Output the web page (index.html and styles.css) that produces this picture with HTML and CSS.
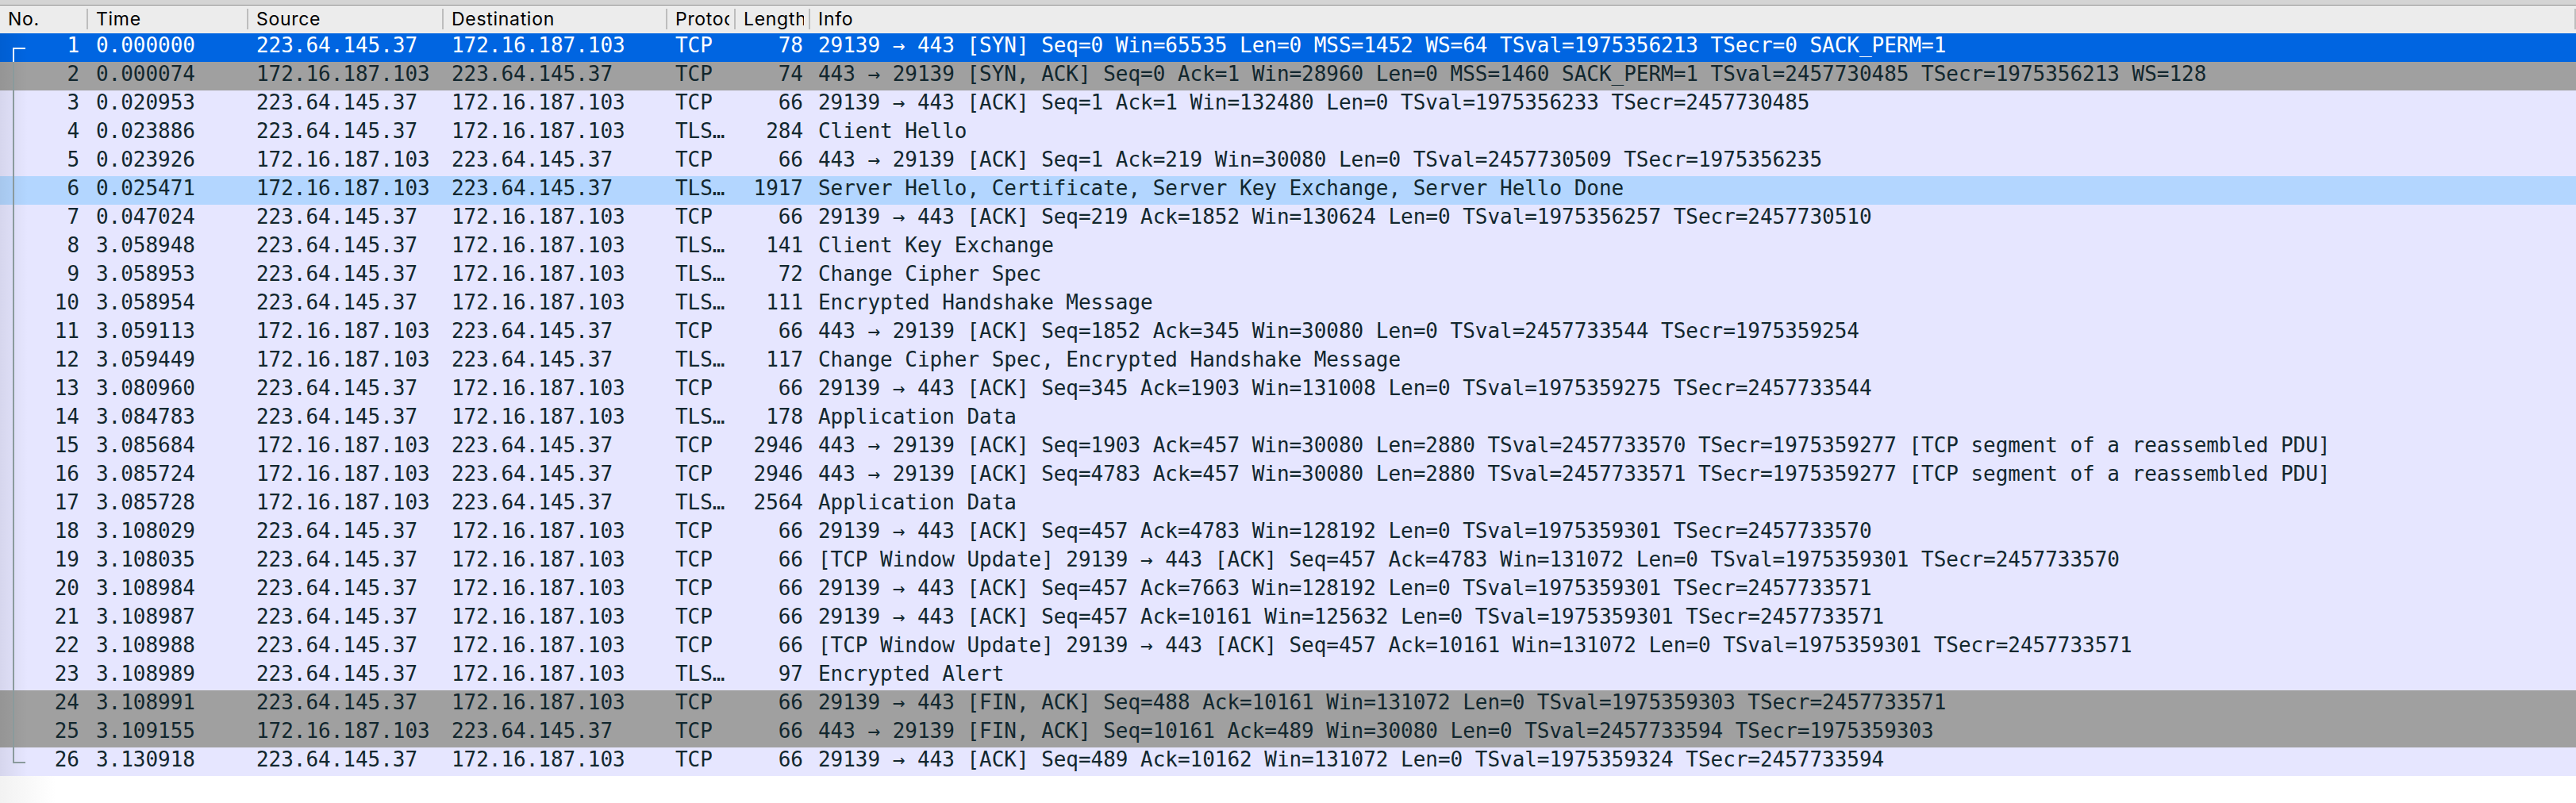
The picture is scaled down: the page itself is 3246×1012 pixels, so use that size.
FILE: index.html
```html
<!DOCTYPE html>
<html lang="en">

<head>
    <meta charset="UTF-8">
    <title>Packet List</title>
    <link rel="stylesheet" href="styles.css">
</head>

<body>
    <div class="toolbar-edge"></div>
    <table class="packet-list">
        <colgroup>
            <col class="col-no">
            <col class="col-time">
            <col class="col-source">
            <col class="col-dest">
            <col class="col-proto">
            <col class="col-length">
            <col>
        </colgroup>
        <thead>
            <tr>
                <th><span>No.</span></th>
                <th><span>Time</span></th>
                <th><span>Source</span></th>
                <th><span>Destination</span></th>
                <th><span>Protocol</span></th>
                <th><span>Length</span></th>
                <th class="last"><span>Info</span></th>
            </tr>
        </thead>
        <tbody>
            <tr class="selected"><td class="no"><i class="tree tree-first"></i>1</td><td>0.000000</td><td>223.64.145.37</td><td>172.16.187.103</td><td>TCP</td><td class="len">78</td><td>29139 → 443 [SYN] Seq=0 Win=65535 Len=0 MSS=1452 WS=64 TSval=1975356213 TSecr=0 SACK_PERM=1</td></tr>
            <tr class="flagged"><td class="no"><i class="tree"></i>2</td><td>0.000074</td><td>172.16.187.103</td><td>223.64.145.37</td><td>TCP</td><td class="len">74</td><td>443 → 29139 [SYN, ACK] Seq=0 Ack=1 Win=28960 Len=0 MSS=1460 SACK_PERM=1 TSval=2457730485 TSecr=1975356213 WS=128</td></tr>
            <tr><td class="no"><i class="tree"></i>3</td><td>0.020953</td><td>223.64.145.37</td><td>172.16.187.103</td><td>TCP</td><td class="len">66</td><td>29139 → 443 [ACK] Seq=1 Ack=1 Win=132480 Len=0 TSval=1975356233 TSecr=2457730485</td></tr>
            <tr><td class="no"><i class="tree"></i>4</td><td>0.023886</td><td>223.64.145.37</td><td>172.16.187.103</td><td>TLS…</td><td class="len">284</td><td>Client Hello</td></tr>
            <tr><td class="no"><i class="tree"></i>5</td><td>0.023926</td><td>172.16.187.103</td><td>223.64.145.37</td><td>TCP</td><td class="len">66</td><td>443 → 29139 [ACK] Seq=1 Ack=219 Win=30080 Len=0 TSval=2457730509 TSecr=1975356235</td></tr>
            <tr class="related"><td class="no"><i class="tree"></i>6</td><td>0.025471</td><td>172.16.187.103</td><td>223.64.145.37</td><td>TLS…</td><td class="len">1917</td><td>Server Hello, Certificate, Server Key Exchange, Server Hello Done</td></tr>
            <tr><td class="no"><i class="tree"></i>7</td><td>0.047024</td><td>223.64.145.37</td><td>172.16.187.103</td><td>TCP</td><td class="len">66</td><td>29139 → 443 [ACK] Seq=219 Ack=1852 Win=130624 Len=0 TSval=1975356257 TSecr=2457730510</td></tr>
            <tr><td class="no"><i class="tree"></i>8</td><td>3.058948</td><td>223.64.145.37</td><td>172.16.187.103</td><td>TLS…</td><td class="len">141</td><td>Client Key Exchange</td></tr>
            <tr><td class="no"><i class="tree"></i>9</td><td>3.058953</td><td>223.64.145.37</td><td>172.16.187.103</td><td>TLS…</td><td class="len">72</td><td>Change Cipher Spec</td></tr>
            <tr><td class="no"><i class="tree"></i>10</td><td>3.058954</td><td>223.64.145.37</td><td>172.16.187.103</td><td>TLS…</td><td class="len">111</td><td>Encrypted Handshake Message</td></tr>
            <tr><td class="no"><i class="tree"></i>11</td><td>3.059113</td><td>172.16.187.103</td><td>223.64.145.37</td><td>TCP</td><td class="len">66</td><td>443 → 29139 [ACK] Seq=1852 Ack=345 Win=30080 Len=0 TSval=2457733544 TSecr=1975359254</td></tr>
            <tr><td class="no"><i class="tree"></i>12</td><td>3.059449</td><td>172.16.187.103</td><td>223.64.145.37</td><td>TLS…</td><td class="len">117</td><td>Change Cipher Spec, Encrypted Handshake Message</td></tr>
            <tr><td class="no"><i class="tree"></i>13</td><td>3.080960</td><td>223.64.145.37</td><td>172.16.187.103</td><td>TCP</td><td class="len">66</td><td>29139 → 443 [ACK] Seq=345 Ack=1903 Win=131008 Len=0 TSval=1975359275 TSecr=2457733544</td></tr>
            <tr><td class="no"><i class="tree"></i>14</td><td>3.084783</td><td>223.64.145.37</td><td>172.16.187.103</td><td>TLS…</td><td class="len">178</td><td>Application Data</td></tr>
            <tr><td class="no"><i class="tree"></i>15</td><td>3.085684</td><td>172.16.187.103</td><td>223.64.145.37</td><td>TCP</td><td class="len">2946</td><td>443 → 29139 [ACK] Seq=1903 Ack=457 Win=30080 Len=2880 TSval=2457733570 TSecr=1975359277 [TCP segment of a reassembled PDU]</td></tr>
            <tr><td class="no"><i class="tree"></i>16</td><td>3.085724</td><td>172.16.187.103</td><td>223.64.145.37</td><td>TCP</td><td class="len">2946</td><td>443 → 29139 [ACK] Seq=4783 Ack=457 Win=30080 Len=2880 TSval=2457733571 TSecr=1975359277 [TCP segment of a reassembled PDU]</td></tr>
            <tr><td class="no"><i class="tree"></i>17</td><td>3.085728</td><td>172.16.187.103</td><td>223.64.145.37</td><td>TLS…</td><td class="len">2564</td><td>Application Data</td></tr>
            <tr><td class="no"><i class="tree"></i>18</td><td>3.108029</td><td>223.64.145.37</td><td>172.16.187.103</td><td>TCP</td><td class="len">66</td><td>29139 → 443 [ACK] Seq=457 Ack=4783 Win=128192 Len=0 TSval=1975359301 TSecr=2457733570</td></tr>
            <tr><td class="no"><i class="tree"></i>19</td><td>3.108035</td><td>223.64.145.37</td><td>172.16.187.103</td><td>TCP</td><td class="len">66</td><td>[TCP Window Update] 29139 → 443 [ACK] Seq=457 Ack=4783 Win=131072 Len=0 TSval=1975359301 TSecr=2457733570</td></tr>
            <tr><td class="no"><i class="tree"></i>20</td><td>3.108984</td><td>223.64.145.37</td><td>172.16.187.103</td><td>TCP</td><td class="len">66</td><td>29139 → 443 [ACK] Seq=457 Ack=7663 Win=128192 Len=0 TSval=1975359301 TSecr=2457733571</td></tr>
            <tr><td class="no"><i class="tree"></i>21</td><td>3.108987</td><td>223.64.145.37</td><td>172.16.187.103</td><td>TCP</td><td class="len">66</td><td>29139 → 443 [ACK] Seq=457 Ack=10161 Win=125632 Len=0 TSval=1975359301 TSecr=2457733571</td></tr>
            <tr><td class="no"><i class="tree"></i>22</td><td>3.108988</td><td>223.64.145.37</td><td>172.16.187.103</td><td>TCP</td><td class="len">66</td><td>[TCP Window Update] 29139 → 443 [ACK] Seq=457 Ack=10161 Win=131072 Len=0 TSval=1975359301 TSecr=2457733571</td></tr>
            <tr><td class="no"><i class="tree"></i>23</td><td>3.108989</td><td>223.64.145.37</td><td>172.16.187.103</td><td>TLS…</td><td class="len">97</td><td>Encrypted Alert</td></tr>
            <tr class="flagged"><td class="no"><i class="tree"></i>24</td><td>3.108991</td><td>223.64.145.37</td><td>172.16.187.103</td><td>TCP</td><td class="len">66</td><td>29139 → 443 [FIN, ACK] Seq=488 Ack=10161 Win=131072 Len=0 TSval=1975359303 TSecr=2457733571</td></tr>
            <tr class="flagged"><td class="no"><i class="tree"></i>25</td><td>3.109155</td><td>172.16.187.103</td><td>223.64.145.37</td><td>TCP</td><td class="len">66</td><td>443 → 29139 [FIN, ACK] Seq=10161 Ack=489 Win=30080 Len=0 TSval=2457733594 TSecr=1975359303</td></tr>
            <tr><td class="no"><i class="tree tree-last"></i>26</td><td>3.130918</td><td>223.64.145.37</td><td>172.16.187.103</td><td>TCP</td><td class="len">66</td><td>29139 → 443 [ACK] Seq=489 Ack=10162 Win=131072 Len=0 TSval=1975359324 TSecr=2457733594</td></tr>
        </tbody>
    </table>
    <div class="list-footer"></div>
</body>

</html>
```
FILE: styles.css
```css
html,
body {
    height: 100%;
}

body {
    margin: 0;
    display: flex;
    flex-direction: column;
    overflow: hidden;
    background-color: #fff;
}

.toolbar-edge {
    height: 6px;
    flex: none;
    background-color: #d4d4d4;
    border-bottom: 1px solid #8f8f8f;
}

.packet-list {
    width: 100%;
    flex: none;
    table-layout: fixed;
    border-collapse: collapse;
}

.col-no {
    width: 111px;
}

.col-time {
    width: 202px;
}

.col-source {
    width: 246px;
}

.col-dest {
    width: 282px;
}

.col-proto {
    width: 86px;
}

.col-length {
    width: 94px;
}

th {
    height: 34px;
    padding: 0 8px 1px 10px;
    background-color: #ececec;
    background-image: linear-gradient(#bdbdbd, #bdbdbd);
    background-repeat: no-repeat;
    background-size: 2px 26px;
    background-position: right 4px;
    color: #000;
    font-family: "Inter", "Liberation Sans", sans-serif;
    font-size: 23px;
    font-weight: 400;
    letter-spacing: 0.7px;
    text-align: left;
}

th span {
    display: block;
    overflow: hidden;
    white-space: nowrap;
    line-height: 34px;
}

td {
    height: 30px;
    padding: 0 0 6px 10px;
    background-color: #e6e6ff;
    color: #12272e;
    font-family: "DejaVu Sans Mono", monospace;
    font-size: 26px;
    letter-spacing: -0.035px;
    line-height: 30px;
    white-space: nowrap;
    overflow: hidden;
}

td.no {
    position: relative;
    padding: 0 11px 6px 0;
    text-align: right;
    background-image: linear-gradient(90deg, rgba(0, 0, 0, 0.07), rgba(0, 0, 0, 0) 35px);
}

td.len {
    padding: 0 9px 6px 0;
    text-align: right;
}

.selected td {
    background-color: #0065e1;
    color: #fff;
}

.flagged td {
    background-color: #a0a0a0;
}

.related td {
    background-color: #b3d6ff;
}

/* conversation bracket in the gutter */
.tree {
    position: absolute;
    left: 16px;
    top: 0;
    bottom: 0;
    width: 2px;
    background-color: #8a9a9c;
}

.tree-first,
.tree-last {
    width: 16px;
    height: 18px;
    box-sizing: border-box;
    background-color: transparent;
    border-left: 2px solid #8a9a9c;
}

.tree-first {
    top: 18px;
    bottom: auto;
    border-top: 2px solid #fff;
    border-left-color: #fff;
}

.tree-last {
    height: 20px;
    bottom: auto;
    border-bottom: 2px solid #8a9a9c;
}

.list-footer {
    flex: 1;
    background: linear-gradient(90deg, #f2f2f2, #fff 70px);
}
```
